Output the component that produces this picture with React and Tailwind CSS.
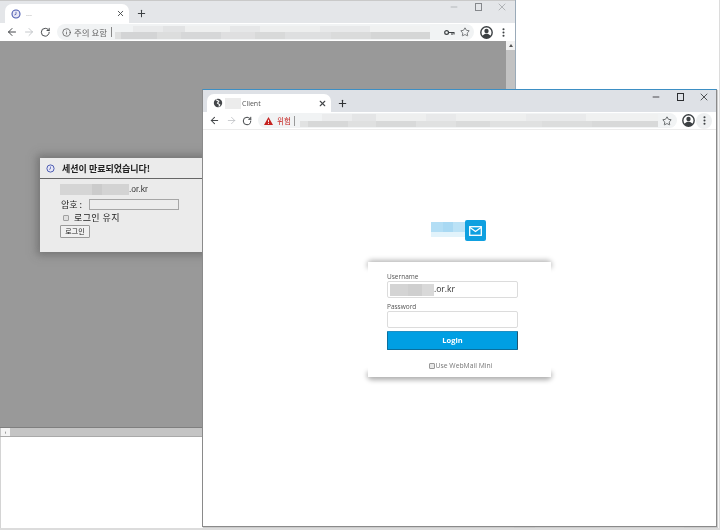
import React from "react";
import { ArrowLeft, ArrowRight, RotateCw, Star, Plus, X, Minus, EllipsisVertical, Info } from "lucide-react";

const kr = { fontFamily: '"Noto Sans CJK KR", "Noto Sans", sans-serif' };

function Mosaic({ rows, className }) {
  return (
    <div className={"flex flex-col blur-[0.6px] overflow-hidden " + className}>
      {rows.map((r, i) => (
        <div key={i} className="flex flex-1">
          {r.map(([w, c], j) => (
            <div key={j} style={{ width: w, background: c }} />
          ))}
        </div>
      ))}
    </div>
  );
}

function Profile() {
  return (
    <svg width="13" height="13" viewBox="0 0 24 24" fill="none">
      <circle cx="12" cy="12" r="10.500" stroke="#3c4043" strokeWidth="2.600" />
      <circle cx="12" cy="9.200" r="4" fill="#3c4043" />
      <path d="M4.500 18.500c2-3.400 5-4.200 7.500-4.200s5.500.8 7.500 4.200c-2 2.600-4.500 4-7.500 4s-5.500-1.400-7.500-4z" fill="#3c4043" />
    </svg>
  );
}

function Tab({ icon, title, bold, height }) {
  return (
    <div className={height + " w-[124px] ml-[5px] bg-white rounded-t-[7px] flex items-center pl-[6px] pr-[4px]"}>
      {icon}
      <div className="flex-1 min-w-0 flex items-center">{title}</div>
      <X size={9} strokeWidth={bold ? 3 : 2.400} color="#44474a" />
    </div>
  );
}

function Controls({ dark }) {
  const c = dark ? "#2b2d30" : "#85888c";
  return (
    <div className="ml-auto flex items-center h-full">
      <div className="w-[24px] flex justify-center"><Minus size={10} strokeWidth={dark ? 2 : 1.200} color={c} /></div>
      <div className="w-[24px] flex justify-center">
        <div className="w-[7px] h-[8px] border" style={{ borderColor: c, borderWidth: dark ? 1.500 : 1 }} />
      </div>
      <div className="w-[24px] flex justify-center"><X size={12} strokeWidth={dark ? 1.600 : 1.100} color={c} /></div>
    </div>
  );
}

function BackWindow() {
  return (
    <div className="absolute left-0 top-0 w-[516px] h-[528px] bg-white border-l border-r border-r-[#9aaab8] border-l-[#d4d4d4] flex flex-col">
      <div className="h-[23px] bg-[#e4e6e9] border-t border-[#c9c9c9] flex items-end shrink-0 -ml-px">
        <Tab
          height="h-[19px]"
          icon={
            <svg width="10" height="10" viewBox="0 0 10 10" className="mr-[5px] shrink-0">
              <circle cx="5" cy="5" r="4" fill="#e8e8f6" stroke="#4a5ab0" strokeWidth="1.100" />
              <path d="M5 2.800V5.300L3.400 6" stroke="#4a5ab0" strokeWidth="0.800" fill="none" />
            </svg>
          }
          title={<span className="text-[7px] text-[#999] leading-none" style={kr}>...</span>}
        />
        <div className="ml-[7px] mb-[4px]"><Plus size={11} strokeWidth={2.200} color="#3c4043" /></div>
        <div className="self-start h-[12px] flex-1 flex mr-[1px]"><Controls /></div>
      </div>
      <div className="h-[18px] bg-white flex items-center shrink-0 -ml-px">
        <div className="w-[57px] flex items-center pl-[6px] shrink-0">
          <ArrowLeft size={12} strokeWidth={2} color="#44474a" />
          <ArrowRight size={12} strokeWidth={1.600} color="#b8bbbf" className="ml-[5px]" />
          <RotateCw size={10.500} strokeWidth={2.200} color="#44474a" className="ml-[5px]" />
        </div>
        <div className="w-[417px] h-[16px] rounded-full bg-[#f1f3f4] flex items-center pl-[5px] relative">
          <Info size={9} strokeWidth={1.800} color="#444" />
          <span className="ml-[3px] text-[8.500px] text-[#666] leading-none" style={kr}>주의 요함</span>
          <div className="w-px h-[10px] bg-[#888] ml-[4px]" />
          <Mosaic
            className="ml-[3px] w-[315px] h-[13px]"
            rows={[
              [[18, "#f1f3f4"], [30, "#e9eaeb"], [22, "#e2e3e4"], [45, "#eeefef"], [30, "#e6e7e8"], [60, "#edeeee"], [50, "#e8e9ea"], [60, "#f0f1f1"]],
              [[6, "#dfe0e0"], [36, "#d3d4d5"], [24, "#dcdddd"], [40, "#d6d7d8"], [34, "#dfdfe0"], [30, "#d8d9d9"], [46, "#dedfe0"], [40, "#dadbdb"], [59, "#d5d6d6"]],
            ]}
          />
          <svg width="11" height="7" viewBox="0 0 11 7" className="absolute left-[387px] top-[4.500px]">
            <circle cx="2.600" cy="3.500" r="1.900" fill="none" stroke="#3c4043" strokeWidth="1.200" />
            <path d="M4.500 3.500H10.500M8 3.500V6M10 3.500V5.500" stroke="#3c4043" strokeWidth="1.100" fill="none" />
          </svg>
          <Star size={10} strokeWidth={1.600} color="#3c4043" className="absolute left-[403px] top-[3px]" />
        </div>
        <div className="ml-[6px]"><Profile /></div>
        <div className="ml-[5px]"><EllipsisVertical size={11} strokeWidth={2.500} color="#3c4043" /></div>
      </div>
      <div className="h-[396px] flex shrink-0 -ml-px">
        <div className="flex-1 relative">
          <div className="h-[387px] bg-[#999999] border-b border-[#7f7f7f]" />
          <div className="h-[9px] bg-[#c4c4c4] flex border-b border-[#a9a9a9]">
            <div className="w-[9px] bg-[#f4f4f4] ml-[1px] flex items-center justify-center text-[5px] leading-none text-[#444]">‹</div>
          </div>
          <div className="absolute left-[40px] top-[117px] w-[166px] h-[94px] bg-[#ebebeb] shadow-[0_0_8px_3px_rgba(80,80,80,0.5)]">
            <div className="h-[21px] border-b border-[#666] flex items-center pl-[6px]">
              <svg width="9" height="9" viewBox="0 0 10 10" className="shrink-0">
                <circle cx="5" cy="5" r="4" fill="#e8e8f6" stroke="#4a5ab0" strokeWidth="1.100" />
                <path d="M5 2.800V5.300L3.400 6" stroke="#4a5ab0" strokeWidth="0.800" fill="none" />
              </svg>
              <span className="ml-[7px] text-[9px] font-bold text-[#222] leading-none whitespace-nowrap" style={kr}>세션이 만료되었습니다!</span>
            </div>
            <div className="pl-[20px] pt-[4px]">
              <div className="flex items-center h-[12px]">
                <Mosaic className="w-[69px] h-[11px]" rows={[[[32, "#d5d5d5"], [10, "#cbcbcb"], [27, "#d3d3d3"]]]} />
                <span className="text-[8.500px] text-[#333] leading-none" style={{ fontFamily: '"Liberation Sans", sans-serif' }}>.or.kr</span>
              </div>
              <div className="flex items-center mt-[2px] h-[14px] pl-[1px]">
                <span className="text-[9px] text-[#222] leading-none w-[28px] whitespace-nowrap" style={kr}>암호 :</span>
                <div className="w-[90px] h-[11px] bg-[#ececec] border border-[#a6a6a6]" />
              </div>
              <div className="flex items-center mt-[0px] h-[13px] pl-[3px]">
                <div className="w-[6px] h-[6px] bg-[#e0e0e0] border border-[#a0a0a0] rounded-[1px]" />
                <span className="ml-[5px] text-[9px] text-[#222] leading-none tracking-[0.4px]" style={kr}>로그인 유지</span>
              </div>
              <div className="mt-[1px] w-[30px] h-[13px] bg-[#f0f0f0] border border-[#9a9a9a] rounded-[1px] flex items-center justify-center">
                <span className="text-[7px] text-[#222] leading-none" style={kr}>로그인</span>
              </div>
            </div>
          </div>
        </div>
        <div className="w-[9px] bg-[#c2c2c2] flex flex-col">
          <div className="h-[9px] bg-[#f2f2f2] flex items-center justify-center">
            <div className="border-x-[2.500px] border-x-transparent border-b-[3px] border-b-[#555]" />
          </div>
          <div className="h-[377px] bg-[#c2c2c2]" />
          <div className="h-[10px] bg-[#f2f2f2]" />
        </div>
      </div>
      <div className="flex-1" />
    </div>
  );
}

function FrontWindow() {
  return (
    <div className="absolute left-[202px] top-[89px] w-[515px] h-[438px] bg-white border border-[#8a8a8a] border-t-[#3d8fc4] shadow-[1px_1px_1px_rgba(0,0,0,0.2)] flex flex-col">
      <div className="h-[22px] bg-[#dee1e6] flex items-end shrink-0">
        <div className="ml-[-1px]">
          <Tab
            bold
            height="h-[18px]"
            icon={
              <svg width="10" height="10" viewBox="0 0 10 10" className="mr-[2px] shrink-0">
                <circle cx="5" cy="5" r="4.200" fill="#44474a" />
                <path d="M3 1.800L5.800 3.200L4.500 5.200L6.800 6.800L5.800 8.600" stroke="#fff" strokeWidth="1.100" fill="none" />
              </svg>
            }
            title={
              <>
                <div className="w-[16px] h-[11px] bg-[#ececec]" />
                <span className="ml-[1px] text-[7px] text-[#555] leading-none" style={{ fontFamily: '"Open Sans", sans-serif' }}>Client</span>
              </>
            }
          />
        </div>
        <div className="ml-[6px] mb-[3px]"><Plus size={11} strokeWidth={2.500} color="#2f3134" /></div>
        <div className="self-start h-[14px] flex-1 flex"><Controls dark /></div>
      </div>
      <div className="h-[18px] bg-white flex items-center shrink-0 border-b border-[#ececec]">
        <div className="w-[55px] flex items-center pl-[6px] shrink-0">
          <ArrowLeft size={11} strokeWidth={2.200} color="#44474a" />
          <ArrowRight size={11} strokeWidth={1.600} color="#b8bbbf" className="ml-[6px]" />
          <RotateCw size={10} strokeWidth={2.400} color="#44474a" className="ml-[5px]" />
        </div>
        <div className="w-[419px] h-[15px] rounded-full bg-[#f1f3f4] flex items-center pl-[6px] relative">
          <svg width="9" height="8" viewBox="0 0 9 8"><path d="M4.500 0L9 8H0z" fill="#c5221f" /><path d="M4.500 2.800V5.200M4.500 6V7" stroke="#fff" strokeWidth="0.900" /></svg>
          <span className="ml-[4px] text-[7.500px] text-[#c5221f] leading-none" style={kr}>위험</span>
          <div className="w-px h-[10px] bg-[#999] ml-[3px]" />
          <Mosaic
            className="ml-[5px] w-[358px] h-[13px]"
            rows={[
              [[22, "#f1f3f4"], [30, "#ebeced"], [24, "#e4e5e6"], [50, "#eeefef"], [30, "#e8e9ea"], [70, "#eeefef"], [60, "#e9eaeb"], [72, "#f0f1f1"]],
              [[8, "#e1e2e2"], [40, "#d7d8d8"], [28, "#dfe0e0"], [40, "#d8d9d9"], [40, "#e0e1e1"], [34, "#dadbdb"], [52, "#e0e1e1"], [50, "#dcdddd"], [66, "#d8d9d9"]],
            ]}
          />
          <Star size={10} strokeWidth={1.800} color="#3c4043" className="absolute left-[404px] top-[2.500px]" />
        </div>
        <div className="ml-[5px]"><Profile /></div>
        <div className="ml-[1px] w-[16px] h-[16px] rounded-full bg-[#eef0f1] flex items-center justify-center">
          <EllipsisVertical size={11} strokeWidth={2.500} color="#3c4043" />
        </div>
      </div>

      <div className="flex-1 flex flex-col items-center pt-[90px]">
        <div className="flex items-center h-[21px] ml-[-3px]">
          <Mosaic
            className="w-[34px] h-[16px] -mt-[2px]"
            rows={[
              [[12, "#b3def5"], [10, "#a9d9f3"], [12, "#bbe2f6"]],
              [[12, "#b3def5"], [10, "#a9d9f3"], [12, "#bbe2f6"]],
              [[34, "#e2f3fb"]],
            ]}
          />
          <div className="w-[21px] h-[21px] rounded-[2px] bg-[#0fa0e0] flex items-center justify-center">
            <svg width="13" height="10" viewBox="0 0 13 10" fill="none">
              <rect x="0.700" y="0.700" width="11.600" height="8.600" stroke="#fff" strokeWidth="1.300" />
              <path d="M1 1.500L6.500 5.500L12 1.500" stroke="#fff" strokeWidth="1.300" />
            </svg>
          </div>
        </div>

        <div className="relative w-[183px] h-[115px] mt-[21px]">
          <div className="absolute left-0 right-0 top-0 h-[6px] rounded-t-[4px] bg-white shadow-[0_-1px_5px_1px_rgba(0,0,0,0.28)]" />
          <div className="absolute left-0 right-0 bottom-0 h-[6px] rounded-b-[4px] bg-white shadow-[0_2px_5px_1px_rgba(0,0,0,0.32)]" />
          <div className="relative h-full bg-white px-[19px] pt-[10px]" style={{ fontFamily: '"Open Sans", sans-serif' }}>
            <div className="text-[6.500px] leading-[9px] text-[#555]">Username</div>
            <div className="h-[17px] w-[131px] border border-[#dcdcdc] rounded-[2px] flex items-center pl-[2px]">
              <Mosaic className="w-[44px] h-[12px]" rows={[[[18, "#d4d4d4"], [14, "#cfcfcf"], [12, "#d9d9d9"]]]} />
              <span className="text-[8.500px] text-[#333] leading-none">.or.kr</span>
            </div>
            <div className="text-[6.500px] leading-[9px] text-[#555] mt-[4px]">Password</div>
            <div className="h-[17px] w-[131px] border border-[#dcdcdc] rounded-[2px]" />
            <div className="h-[19px] w-[131px] mt-[3px] bg-[#009fe3] border border-[#0a6f9e] border-t-[#1d8fc4] border-r-[#24546e] rounded-[1px] flex items-center justify-center text-white text-[7.500px] font-bold leading-none">Login</div>
            <div className="mt-[11px] flex items-center justify-center h-[10px] ml-[2px]">
              <div className="w-[6px] h-[6px] bg-[#e8e8e8] border border-[#999] rounded-[1px]" />
              <span className="ml-[1px] text-[6.800px] text-[#777] leading-none">Use WebMail Mini</span>
            </div>
          </div>
        </div>
      </div>
    </div>
  );
}

export default function App() {
  return (
    <div className="relative w-[720px] h-[530px] bg-white overflow-hidden border-r border-b-2 border-[#dcdcdc] blur-[0.3px]">
      <BackWindow />
      <FrontWindow />
      <div className="absolute left-[514px] top-[527px] w-[21px] h-px bg-[#c8c8c8]" />
      <div className="absolute left-[600px] top-[527px] w-[84px] h-px bg-[#d0d0d0]" />
    </div>
  );
}
